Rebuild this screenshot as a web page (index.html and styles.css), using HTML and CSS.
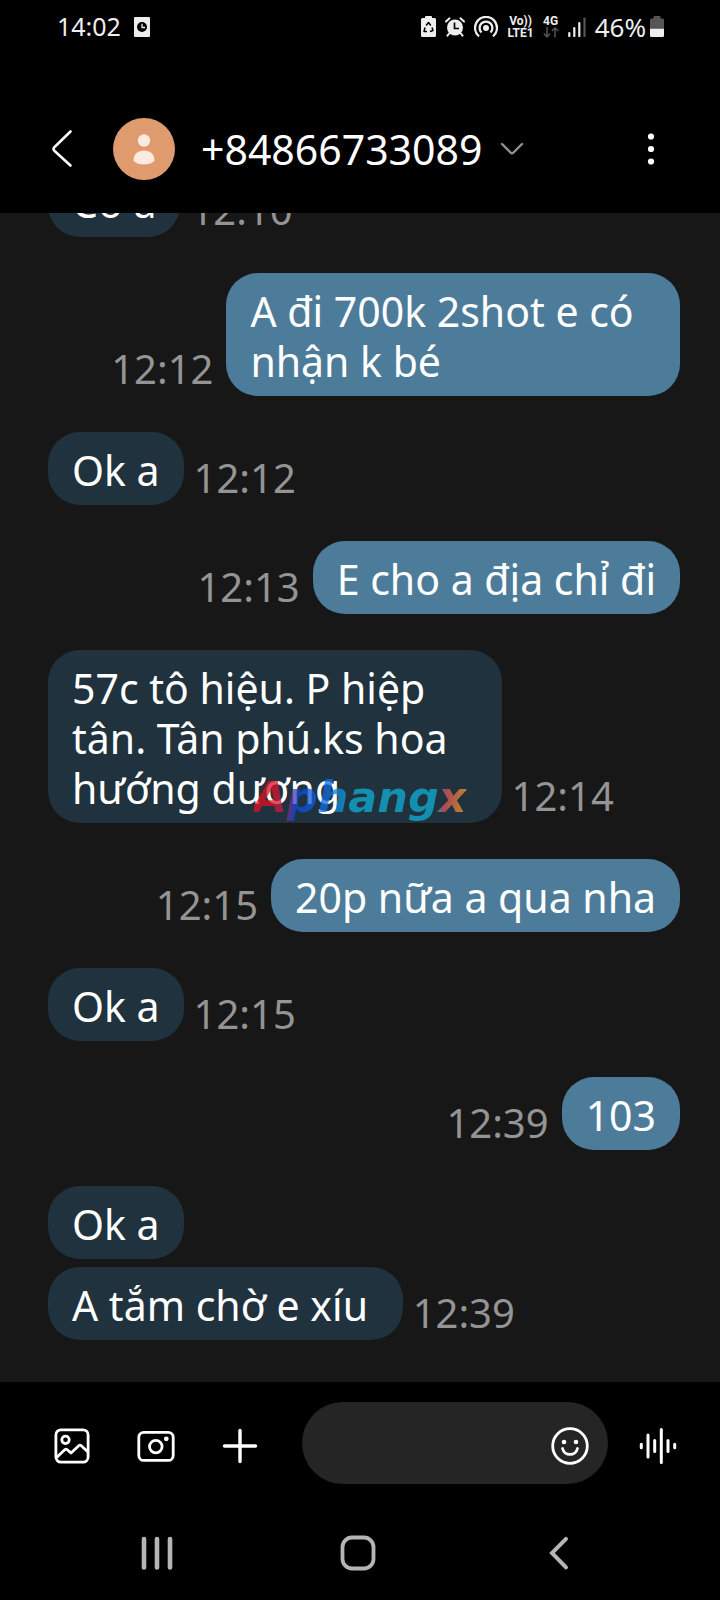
FILE: index.html
```html
<!DOCTYPE html>
<html lang="vi">
<head>
<meta charset="utf-8">
<meta name="viewport" content="width=device-width, initial-scale=1">
<title>+84866733089</title>
<link rel="stylesheet" href="styles.css">
</head>
<body>
<div class="phone">
  <div class="status">
    <div class="status-group status-left">
      <span class="clock">14:02</span>
      <svg width="16" height="20" viewBox="0 0 16 20"><rect width="16" height="20" rx="1" fill="#eee"/><circle cx="8" cy="10" r="5" fill="#000"/><path d="M8 6.800V10.500H11" fill="none" stroke="#eee" stroke-width="1.300"/></svg>
    </div>
    <div class="status-group">
      <svg width="15" height="21" viewBox="0 0 15 21"><path d="M4 2V1q0-1 1-1h5q1 0 1 1v1h2.500q1.500 0 1.500 1.500v16q0 1.500-1.500 1.500h-12Q0 21 0 19.500v-16Q0 2 1.500 2z" fill="#eee"/><path d="M5.200 9.500L7.500 6.500L9.800 9.500M11 11.500L12 14.500L9 15.500M6 15.500H3L4 11.500" fill="none" stroke="#000" stroke-width="1.500" stroke-linejoin="round"/></svg>
      <svg width="20" height="20" viewBox="0 0 20 20"><circle cx="10" cy="10.500" r="8" fill="#eee"/><path d="M1 4.500L4.500 1.300M19 4.500L15.500 1.300M4.500 16L2.500 18.700M15.500 16L17.500 18.700" stroke="#eee" stroke-width="2" stroke-linecap="round"/><path d="M9.500 5.500V11.500H14" fill="none" stroke="#000" stroke-width="1.700"/></svg>
      <svg width="24" height="22" viewBox="0 0 24 22"><circle cx="12" cy="12" r="3" fill="#eee"/><path d="M7.500 16.500A6.400 6.400 0 1 1 16.500 16.500M5 20.400A11 11 0 1 1 19 20.400" fill="none" stroke="#eee" stroke-width="2.300"/></svg>
      <span class="network"><span>Vo))</span><span>LTE1</span></span>
      <span class="network"><span>4G</span><svg width="16" height="11" viewBox="0 0 16 11"><path d="M4 0V9.500M.8 6.500L4 9.800L7.200 6.500M12 10.500V1M8.800 4L12 1L15.200 4" fill="none" stroke="#555" stroke-width="1.500"/></svg></span>
      <svg width="18" height="20" viewBox="0 0 18 20"><path d="M1.300 19V16M6.300 19V11M11.300 19V6" stroke="#eee" stroke-width="2.200" stroke-linecap="round"/><path d="M16.500 19V1.500" stroke="#555" stroke-width="2.200" stroke-linecap="round"/></svg>
      <span class="battery"><span>46%</span><svg width="14" height="21" viewBox="0 0 14 21"><path d="M0 12V4q0-1.500 1.500-1.500H3.500V1q0-1 1-1h5q1 0 1 1v1.500h2Q14 2.500 14 4v8z" fill="#555"/><path d="M0 12.500H14V19.500q0 1.500-1.500 1.500h-11Q0 21 0 19.500z" fill="#eee"/></svg></span>
    </div>
  </div>

  <header class="header">
    <button class="icon-button" aria-label="Quay lại"><svg width="22" height="40" viewBox="0 0 22 40"><path d="M19.500 2.500L3 18.500Q2 20 3 21.500L19.500 36.500" fill="none" stroke="#fff" stroke-width="2.600" stroke-linecap="round"/></svg></button>
    <svg class="avatar" width="62" height="62" viewBox="0 0 62 62"><circle cx="31" cy="31" r="31" fill="#df9b6d"/><circle cx="31" cy="22.500" r="6.200" fill="#fbeadf"/><path d="M20.500 42.500C20.500 36 25 32.500 31 32.500S41.500 36 41.500 42.500C39 45.500 35 46.500 31 46.500S23 45.500 20.500 42.500z" fill="#fbeadf"/></svg>
    <button class="contact"><span>+84866733089</span><svg width="24" height="14" viewBox="0 0 24 14"><path d="M2 2L10.500 10.500Q12 12 13.500 10.500L22 2" fill="none" stroke="#929292" stroke-width="2.400" stroke-linecap="round"/></svg></button>
    <button class="icon-button" aria-label="Tùy chọn khác"><svg width="8" height="32" viewBox="0 0 8 32"><g fill="#fff"><circle cx="4" cy="3.500" r="3.100"/><circle cx="4" cy="16" r="3.100"/><circle cx="4" cy="28.500" r="3.100"/></g></svg></button>
  </header>

  <main class="chat">
    <div class="row"><p class="bubble">Có a</p><time class="time">12:10</time></div>
    <div class="row sent"><p class="bubble">A đi 700k 2shot e có nhận k bé</p><time class="time">12:12</time></div>
    <div class="row"><p class="bubble">Ok a</p><time class="time">12:12</time></div>
    <div class="row sent"><p class="bubble">E cho a địa chỉ đi</p><time class="time">12:13</time></div>
    <div class="row"><p class="bubble">57c tô hiệu. P hiệp tân. Tân phú.ks hoa hướng dương</p><time class="time">12:14</time></div>
    <div class="row sent"><p class="bubble">20p nữa a qua nha</p><time class="time">12:15</time></div>
    <div class="row"><p class="bubble">Ok a</p><time class="time">12:15</time></div>
    <div class="row sent"><p class="bubble">103</p><time class="time">12:39</time></div>
    <div class="row"><p class="bubble">Ok a</p></div>
    <div class="row grouped"><p class="bubble">A tắm chờ e xíu&nbsp;</p><time class="time">12:39</time></div>
  </main>

  <form class="composer">
    <div class="tools">
      <button type="button" class="icon-button" aria-label="Thư viện ảnh"><svg width="36" height="36" viewBox="0 0 36 36"><g fill="none" stroke="#fff" stroke-width="2.800" stroke-linejoin="round"><rect x="1.900" y="1.900" width="32.200" height="32.200" rx="5"/><circle cx="11.500" cy="11.800" r="3.700"/><path d="M2.500 29.500L11 21.500Q12 20.700 13 21.500L17 25L25 17.500Q26 16.700 27 17.500L34 24"/></g></svg></button>
      <button type="button" class="icon-button" aria-label="Máy ảnh"><svg width="38" height="36" viewBox="0 0 38 36"><rect x="1.800" y="4.400" width="34.400" height="28" rx="5" fill="none" stroke="#fff" stroke-width="2.800"/><circle cx="18.800" cy="18.600" r="6.300" fill="none" stroke="#fff" stroke-width="2.800"/><circle cx="29.300" cy="10.800" r="2.400" fill="#fff"/></svg></button>
      <button type="button" class="icon-button" aria-label="Thêm"><svg width="36" height="36" viewBox="0 0 36 36"><path d="M18 2.500V33.500M2.500 18H33.500" stroke="#fff" stroke-width="3.400" stroke-linecap="round"/></svg></button>
    </div>
    <div class="field">
      <input class="field-input" type="text" aria-label="Tin nhắn">
      <button type="button" class="icon-button" aria-label="Biểu tượng cảm xúc"><svg width="38" height="38" viewBox="0 0 38 38"><circle cx="19" cy="19" r="17.300" fill="none" stroke="#fff" stroke-width="2.800"/><circle cx="13" cy="15" r="2.300" fill="#fff"/><circle cx="25" cy="15" r="2.300" fill="#fff"/><path d="M11.500 21.500A7.700 7.700 0 0 0 26.500 21.500" fill="none" stroke="#fff" stroke-width="2.800" stroke-linecap="round"/></svg></button>
    </div>
    <button type="button" class="icon-button voice" aria-label="Ghi âm"><svg width="38" height="36" viewBox="0 0 38 36"><path d="M2.300 16.200V19.800M9 7V29M15.700 12.500V23.500M22.300 1.600V34.400M29 12.500V23.500M35.700 16.200V19.800" stroke="#fff" stroke-width="3" stroke-linecap="round"/></svg></button>
  </form>

  <nav class="nav">
    <button class="icon-button" aria-label="Gần đây"><svg width="32" height="36" viewBox="0 0 32 36"><path d="M3 4V32.500M16 4V32.500M29 4V32.500" stroke="#b5b5b5" stroke-width="4.600" stroke-linecap="round"/></svg></button>
    <button class="icon-button" aria-label="Màn hình chính"><svg width="36" height="36" viewBox="0 0 36 36"><rect x="2.500" y="2.500" width="31" height="31" rx="9.500" fill="none" stroke="#b5b5b5" stroke-width="3.800"/></svg></button>
    <button class="icon-button" aria-label="Trở về"><svg width="20" height="36" viewBox="0 0 20 36"><path d="M17 3.800L3 18L17 32.300" fill="none" stroke="#b5b5b5" stroke-width="4" stroke-linecap="round"/></svg></button>
  </nav>

  <div class="watermark">Aphangx</div>
</div>
</body>
</html>
```
FILE: styles.css
```css
* {
  box-sizing: border-box;
}

body {
  margin: 0;
  background: #000;
  color: #fff;
  font-family: "Noto Sans", sans-serif;
}

svg {
  display: block;
  flex: none;
}

button {
  padding: 0;
  border: 0;
  background: none;
  color: inherit;
  font: inherit;
}

.phone {
  position: relative;
  display: flex;
  flex-direction: column;
  height: 100vh;
  overflow: hidden;
}

.status {
  display: flex;
  justify-content: space-between;
  align-items: center;
  flex: none;
  height: 53px;
  margin-bottom: 31px;
  padding: 0 56px 0 57px;
  color: #eee;
  line-height: 36px;
}

.status-group {
  display: flex;
  align-items: center;
  gap: 9px;
}

.status-left {
  gap: 13px;
}

.clock {
  padding-bottom: 2px;
  font-size: 25px;
}

.network {
  display: flex;
  flex-direction: column;
  align-items: center;
  font: 700 12px/12px Roboto, sans-serif;
}

.battery {
  display: flex;
  align-items: center;
  gap: 4px;
  font-size: 26px;
}

.header {
  display: flex;
  align-items: center;
  flex: none;
  height: 129px;
  padding: 0 65px 0 51px;
}

.icon-button {
  display: flex;
  justify-content: center;
  align-items: center;
}

.avatar {
  margin: 0 26px 0 40px;
}

.contact {
  display: flex;
  align-items: center;
  gap: 18px;
  margin-right: auto;
  font-size: 41px;
  line-height: 50px;
}

.chat {
  display: flex;
  flex: 1;
  flex-direction: column;
  justify-content: flex-end;
  gap: 36px;
  min-height: 0;
  padding: 0 40px 42px 48px;
  overflow: hidden;
  background: #171717;
  font-size: 41px;
  line-height: 50px;
}

.row {
  display: flex;
  align-items: flex-end;
  gap: 10px;
}

.sent {
  flex-direction: row-reverse;
  gap: 13px;
}

.grouped {
  margin-top: -28px;
}

.bubble {
  max-width: 63vw;
  margin: 0;
  padding: 13px 24px 10px;
  border-radius: 32px;
  background: #1f323e;
}

.sent .bubble {
  background: #4d7c9b;
}

.time {
  padding-bottom: 2px;
  color: #949494;
  font-size: 40px;
}

.composer {
  display: flex;
  flex: none;
  padding: 20px 43px 22px 54px;
}

.tools {
  display: flex;
  align-items: center;
  gap: 47px;
  padding-top: 6px;
}

.field {
  display: flex;
  align-items: center;
  flex: 1;
  min-width: 0;
  height: 82px;
  margin: 0 31px 0 44px;
  padding: 6px 19px 0 36px;
  border-radius: 41px;
  background: #252525;
}

.field-input {
  flex: 1;
  min-width: 0;
  border: 0;
  outline: 0;
  background: none;
  color: #fff;
  font: inherit;
  font-size: 36px;
}

.voice {
  padding-top: 6px;
}

.nav {
  display: grid;
  grid-template-columns: repeat(3, 1fr);
  justify-items: center;
  align-items: center;
  flex: none;
  height: 94px;
  padding: 0 60px 0 56px;
}

.watermark {
  position: absolute;
  top: 50%;
  left: 50%;
  transform: translate(-50%, -50%);
  padding-bottom: 6px;
  font: italic 700 43px/56px "DejaVu Sans", sans-serif;
  color: transparent;
  background: linear-gradient(100deg, #e01020 10%, #c02050 17%, #0a4be0 22%, #1070e0 36%, #10afd6 46%, #10afd6 84%, #e05060 88%, #f0a820 98%);
  -webkit-background-clip: text;
  background-clip: text;
  opacity: 0.75;
}
```
